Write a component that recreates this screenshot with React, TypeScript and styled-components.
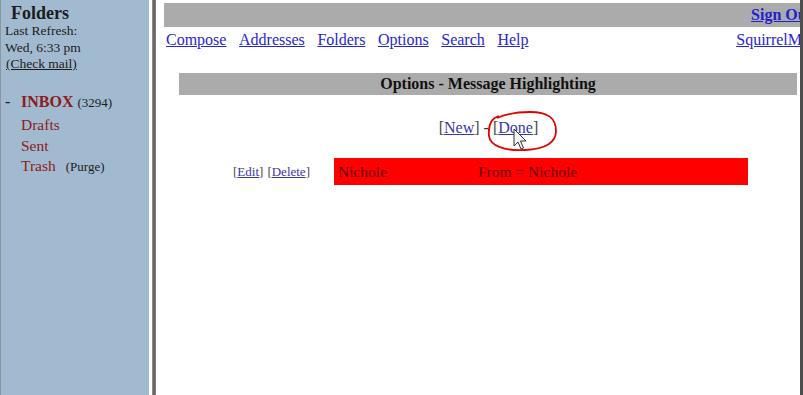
import React from "react";
import styled, { createGlobalStyle } from "styled-components";

const Global = createGlobalStyle`
  html, body { margin: 0; padding: 0; background: #fff; }
  body { width: 803px; height: 395px; overflow: hidden; font-family: "Liberation Serif", "Times New Roman", serif; }
`;

const Page = styled.div`
  position: relative;
  display: flex;
  width: 803px;
  height: 395px;
  overflow: hidden;
`;

const LeftFrame = styled.div`
  width: 149px;
  flex: none;
  background: #a2bacf;
  border-left: 1px solid #8a96a2;
  box-sizing: border-box;
  padding: 3px 0 0 4px;
  color: #1c1c1c;
`;

const FoldersTitle = styled.div`
  font-weight: bold;
  font-size: 18px;
  line-height: 20px;
  margin-left: 6px;
`;

const SmallLine = styled.div`
  font-size: 13.5px;
  line-height: 16.5px;
`;

const CheckMail = styled.span`
  margin-left: 1px;
  text-decoration: underline;
`;

const FolderList = styled.div`
  margin-top: 20px;
`;

const FolderRow = styled.div<{ $tall?: boolean }>`
  display: flex;
  align-items: baseline;
  height: ${(p) => (p.$tall ? "23.5px" : "20.5px")};
`;

const Dash = styled.span`
  width: 16px;
  font-size: 16px;
`;

const FolderName = styled.span<{ $bold?: boolean }>`
  color: #8c1c1c;
  font-size: ${(p) => (p.$bold ? "16px" : "15.5px")};
  font-weight: ${(p) => (p.$bold ? "bold" : "normal")};
  margin-left: ${(p) => (p.$bold ? "0" : "16px")};
`;

const Meta = styled.span<{ $gap: number }>`
  font-size: 13px;
  margin-left: ${(p) => p.$gap}px;
`;

const Divider = styled.div`
  width: 4px;
  flex: none;
  border-left: 3px solid #fff;
  background: linear-gradient(to right, #9a9a9a, #5c5c5c 50%, #8a8a8a);
`;

const RightFrame = styled.div`
  flex: 1;
  min-width: 0;
  overflow: hidden;
  border-right: 3px solid #4d4d4d;
  padding: 3px 0 0 8px;
`;

const Wide = styled.div`
  width: 662px;
`;

const TopBar = styled.div`
  height: 24px;
  background: #ababab;
  display: flex;
  align-items: center;
  justify-content: flex-end;
  padding-right: 14px;
`;

const SignOut = styled.a`
  font-weight: bold;
  font-size: 16px;
  color: #1f1fd0;
  text-decoration: underline;
  white-space: nowrap;
`;

const NavRow = styled.div`
  display: flex;
  align-items: center;
  height: 20px;
  margin-top: 3px;
  padding-left: 2px;
  font-size: 16px;
`;

const NavLink = styled.a`
  color: #2626d2;
  text-decoration: underline;
  margin-right: 12.6px;
  white-space: nowrap;
`;

const Brand = styled(NavLink)`
  margin-left: auto;
  margin-right: 8px;
`;

const Content = styled.div`
  width: 618px;
  margin: 23px 0 0 15px;
`;

const TitleBar = styled.div`
  height: 22px;
  background: #ababab;
  display: flex;
  align-items: center;
  justify-content: center;
  font-weight: bold;
  font-size: 16px;
  color: #111;
`;

const ActionLine = styled.div`
  margin-top: 23px;
  height: 20px;
  display: flex;
  justify-content: center;
  align-items: center;
  font-size: 16px;
  color: #333;
  padding-left: 1px;
`;

const BracketLink = styled.a<{ $small?: boolean }>`
  color: #3737ad;
  text-decoration: underline;
  font-size: ${(p) => (p.$small ? "13px" : "16px")};
`;

const Bracket = styled.span`
  color: #444;
`;

const RuleRow = styled.div`
  margin-top: 20px;
  display: flex;
  justify-content: center;
  align-items: center;
  gap: 24px;
  padding-left: 5px;
`;

const RuleActions = styled.div`
  font-size: 13px;
  display: flex;
  gap: 4px;
`;

const RuleCell = styled.div<{ $bg: string }>`
  width: 414px;
  height: 27px;
  box-sizing: border-box;
  background: ${(p) => p.$bg};
  display: grid;
  grid-template-columns: 140px 1fr;
  align-items: center;
  padding-left: 4px;
  font-size: 15.5px;
  color: #640000;
`;

const Overlay = styled.svg`
  position: absolute;
  left: 0;
  top: 0;
  pointer-events: none;
`;

function Bracketed({ label, small }: { label: string; small?: boolean }) {
  return (
    <span>
      <Bracket>[</Bracket>
      <BracketLink $small={small}>{label}</BracketLink>
      <Bracket>]</Bracket>
    </span>
  );
}

export default function App() {
  const folders = [
    { name: "Drafts" },
    { name: "Sent" },
    { name: "Trash", meta: "(Purge)" },
  ];
  return (
    <>
      <Global />
      <Page>
        <LeftFrame>
          <FoldersTitle>Folders</FoldersTitle>
          <SmallLine>Last Refresh:</SmallLine>
          <SmallLine>Wed, 6:33 pm</SmallLine>
          <SmallLine>
            <CheckMail>(Check mail)</CheckMail>
          </SmallLine>
          <FolderList>
            <FolderRow $tall>
              <Dash>-</Dash>
              <FolderName $bold>INBOX</FolderName>
              <Meta $gap={4}>(3294)</Meta>
            </FolderRow>
            {folders.map((f) => (
              <FolderRow key={f.name}>
                <FolderName>{f.name}</FolderName>
                {f.meta && <Meta $gap={10}>{f.meta}</Meta>}
              </FolderRow>
            ))}
          </FolderList>
        </LeftFrame>
        <Divider />
        <RightFrame>
          <Wide>
            <TopBar>
              <SignOut>Sign Out</SignOut>
            </TopBar>
            <NavRow>
              {["Compose", "Addresses", "Folders", "Options", "Search", "Help"].map((l) => (
                <NavLink key={l}>{l}</NavLink>
              ))}
              <Brand>SquirrelMail</Brand>
            </NavRow>
            <Content>
              <TitleBar>Options - Message Highlighting</TitleBar>
              <ActionLine>
                <Bracketed label="New" />
                <span>&nbsp;-&nbsp;</span>
                <Bracketed label="Done" />
              </ActionLine>
              <RuleRow>
                <RuleActions>
                  <Bracketed label="Edit" small />
                  <Bracketed label="Delete" small />
                </RuleActions>
                <RuleCell $bg="#fe0000">
                  <span>Nichole</span>
                  <span>From = Nichole</span>
                </RuleCell>
              </RuleRow>
            </Content>
          </Wide>
        </RightFrame>
        <Overlay width="803" height="395" viewBox="0 0 803 395">
          <path
            d="M499 116 C 492 118, 488 125, 489 136 C 490 146, 505 151, 525 150 C 545 149, 556 143, 556 131 C 556 118, 548 112, 530 112 C 518 112, 508 113, 497 118"
            fill="none"
            stroke="#e30000"
            strokeWidth="1.8"
          />
          <path
            d="M514 129 L514 146 L518 142 L521 149 L523.5 148 L520.5 141 L526 141 Z"
            fill="#f4f4f4"
            stroke="#333"
            strokeWidth="1"
            strokeLinejoin="round"
          />
        </Overlay>
      </Page>
    </>
  );
}
